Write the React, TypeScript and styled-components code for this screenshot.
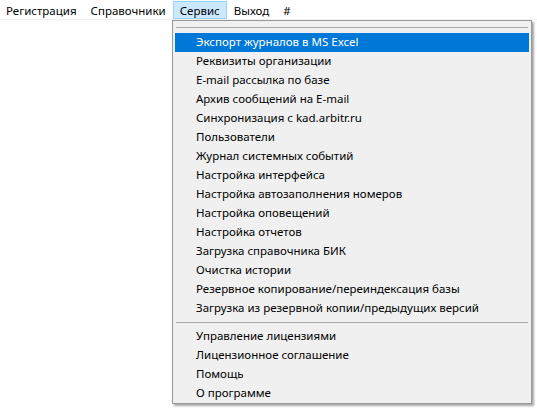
import React from "react";
import styled, { createGlobalStyle } from "styled-components";

const Global = createGlobalStyle`
  html, body { margin: 0; padding: 0; background: #ffffff; }
  body { font-family: "Noto Sans", "Open Sans", sans-serif; font-size: 11.5px; color: #000; }
`;

const Page = styled.div`
  position: relative;
  width: 537px;
  height: 410px;
  background: #ffffff;
`;

const MenuBar = styled.div`
  display: flex;
  align-items: center;
  height: 20px;
  padding-top: 1px;
  box-sizing: border-box;
  border-bottom: 1px solid #f0f0f0;
`;

const TopItem = styled.div<{ $active?: boolean }>`
  height: 18px;
  line-height: 17px;
  padding: 0 6px;
  box-sizing: border-box;
  border: 1px solid ${(p) => (p.$active ? "#99d1ff" : "transparent")};
  background: ${(p) => (p.$active ? "#cce8ff" : "transparent")};
  white-space: nowrap;
  &:first-child { margin-left: -1px; }
`;

const Dropdown = styled.div`
  position: absolute;
  left: 172px;
  top: 20px;
  width: 360px;
  box-sizing: border-box;
  background: #f0f0f0;
  border: 1px solid #979797;
  box-shadow: 2px 2px 2px rgba(0, 0, 0, 0.35);
  display: flex;
  flex-direction: column;
`;

const Separator = styled.div<{ $top?: number; $bottom?: number }>`
  height: 1px;
  background: #a9a9a9;
  margin: ${(p) => p.$top ?? 4}px 3px ${(p) => p.$bottom ?? 4}px 3px;
`;

const Item = styled.div<{ $selected?: boolean }>`
  height: 19px;
  line-height: 18px;
  margin: 0 2px;
  padding-left: 21px;
  white-space: nowrap;
  background: ${(p) => (p.$selected ? "#0078d7" : "transparent")};
  color: ${(p) => (p.$selected ? "#ffffff" : "#000000")};
`;

const group1 = [
  "Экспорт журналов в MS Excel",
  "Реквизиты организации",
  "E-mail рассылка по базе",
  "Архив сообщений на E-mail",
  "Синхронизация с kad.arbitr.ru",
  "Пользователи",
  "Журнал системных событий",
  "Настройка интерфейса",
  "Настройка автозаполнения номеров",
  "Настройка оповещений",
  "Настройка отчетов",
  "Загрузка справочника БИК",
  "Очистка истории",
  "Резервное копирование/переиндексация базы",
  "Загрузка из резервной копии/предыдущих версий",
];

const group2 = [
  "Управление лицензиями",
  "Лицензионное соглашение",
  "Помощь",
  "О программе",
];

export default function App() {
  return (
    <Page>
      <Global />
      <MenuBar>
        <TopItem>Регистрация</TopItem>
        <TopItem>Справочники</TopItem>
        <TopItem $active>Сервис</TopItem>
        <TopItem>Выход</TopItem>
        <TopItem>#</TopItem>
      </MenuBar>
      <Dropdown>
        <Separator $top={6} $bottom={5} />
        {group1.map((t, i) => (
          <Item key={t} $selected={i === 0}>
            {t}
          </Item>
        ))}
        <Separator />
        {group2.map((t) => (
          <Item key={t}>{t}</Item>
        ))}
      </Dropdown>
    </Page>
  );
}
